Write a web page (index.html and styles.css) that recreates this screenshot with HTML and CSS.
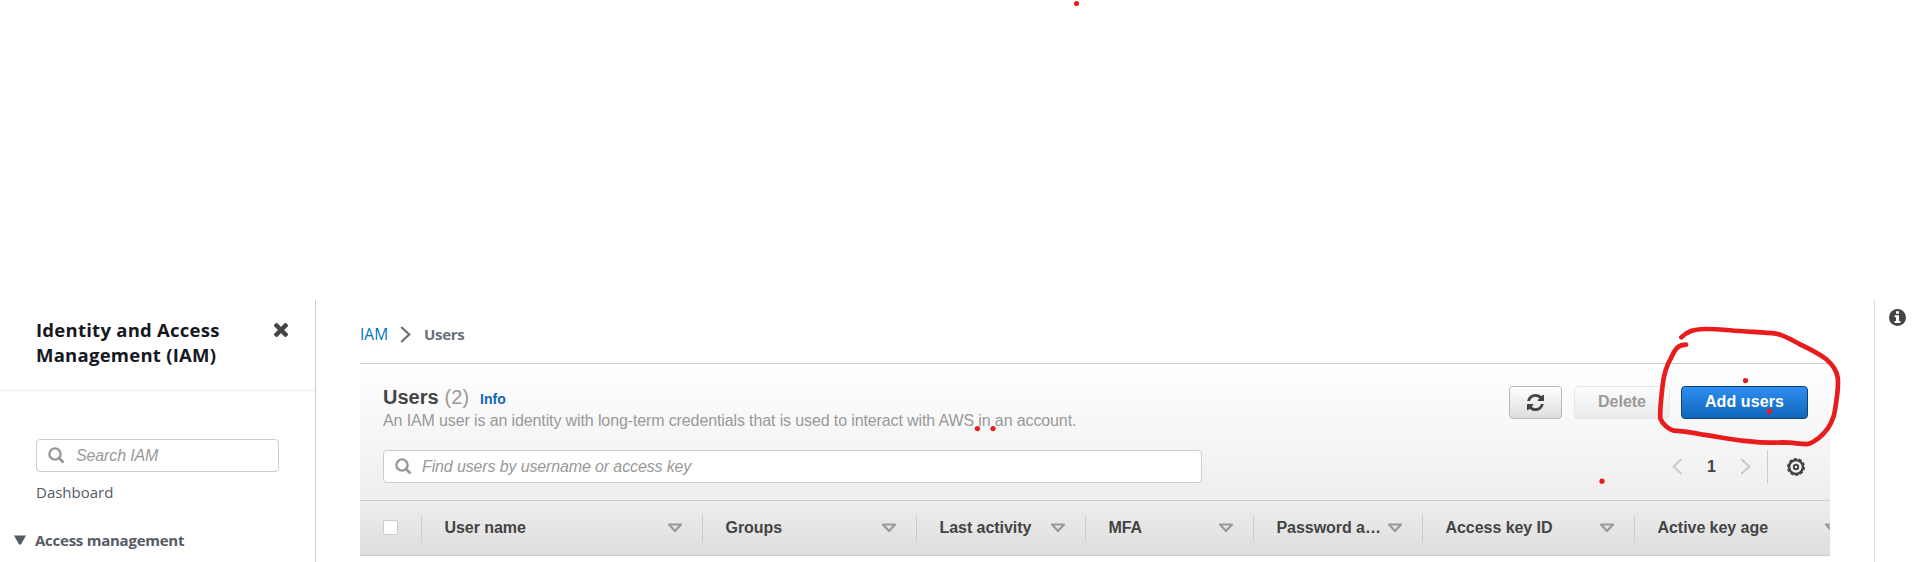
FILE: index.html
```html
<!DOCTYPE html>
<html lang="en">
<head>
<meta charset="utf-8">
<title>IAM Users</title>
<link rel="stylesheet" href="styles.css">
</head>
<body>
<div class="app">
  <nav class="sidebar">
    <div class="side-head">
      <h2 class="side-title">Identity and Access<br>Management (IAM)</h2>
      <svg class="close" width="14" height="14" viewBox="0 0 14 14"><path d="M2.600 2.600 11.400 11.400M11.400 2.600 2.600 11.400" stroke="#444" stroke-width="4.400" stroke-linecap="square"/></svg>
    </div>
    <div class="field side-search">
      <svg width="17" height="17" viewBox="0 0 17 17" fill="none" stroke="#999"><circle cx="7" cy="7" r="5.600" stroke-width="2.400"/><path d="M11 11 15.600 15.400" stroke-width="2.800"/></svg>
      <span>Search IAM</span>
    </div>
    <div class="side-link">Dashboard</div>
    <div class="side-group"><svg width="12" height="10" viewBox="0 0 12 10"><path d="M0 .5H12L7 9.500H5Z" fill="#545b64"/></svg><span>Access management</span></div>
  </nav>
  <main class="main">
    <div class="crumbs">
      <span class="crumb-link">IAM</span>
      <svg width="11" height="17" viewBox="0 0 11 17" fill="none" stroke="#687078" stroke-width="2.200"><path d="M1.200 1 9.200 8.500 1.200 16"/></svg>
      <span class="crumb-here">Users</span>
    </div>
    <section class="panel">
      <div class="panel-head">
        <div class="row">
          <div class="heading">
            <div class="title"><b>Users</b><span class="count">(2)</span><span class="info">Info</span></div>
            <div class="desc">An IAM user is an identity with long-term credentials that is used to interact with AWS in an account.</div>
          </div>
          <div class="actions">
            <div class="btn refresh"><svg width="17" height="17" viewBox="0 0 1536 1536"><path fill="#444" d="M1511 928q0 5-1 7-64 268-268 434.500T764 1536q-146 0-282.500-55T238 1324l-129 129q-19 19-45 19t-45-19-19-45V960q0-26 19-45t45-19h448q26 0 45 19t19 45-19 45l-137 137q71 66 161 102t187 36q134 0 250-65t186-179q11-17 53-117 8-23 30-23h192q13 0 22.500 9.500t9.500 22.500zm25-800v448q0 26-19 45t-45 19h-448q-26 0-45-19t-19-45 19-45l138-138Q969 256 768 256q-134 0-250 65T332 500q-11 17-53 117-8 23-30 23H50q-13 0-22.500-9.500T18 608v-7q65-268 270-434.500T768 0q146 0 284 55.500T1297 212l130-129q19-19 45-19t45 19 19 45z"/></svg></div>
            <div class="btn delete">Delete</div>
            <div class="btn add">Add users</div>
          </div>
        </div>
        <div class="row tools">
          <div class="field find">
            <svg width="17" height="17" viewBox="0 0 17 17" fill="none" stroke="#999"><circle cx="7" cy="7" r="5.600" stroke-width="2.400"/><path d="M11 11 15.600 15.400" stroke-width="2.800"/></svg>
            <span>Find users by username or access key</span>
          </div>
          <div class="pager">
            <svg width="11" height="17" viewBox="0 0 11 17" fill="none" stroke="#ccc" stroke-width="2.200"><path d="M9.600 1 1.600 8.500 9.600 16"/></svg>
            <b>1</b>
            <svg width="11" height="17" viewBox="0 0 11 17" fill="none" stroke="#ccc" stroke-width="2.200"><path d="M1.200 1 9.200 8.500 1.200 16"/></svg>
            <i class="bar"></i>
            <svg width="18" height="18" viewBox="0 0 18 18" fill="none" stroke="#444"><circle cx="9" cy="9" r="6.900" stroke-width="2.400"/><circle cx="9" cy="9" r="8.200" stroke-width="1.600" stroke-dasharray="3.200 1.952"/><circle cx="9" cy="9" r="2.200" stroke-width="2"/></svg>
          </div>
        </div>
      </div>
      <div class="thead">
        <div class="th check"><i class="box"></i></div>
        <div class="th c281">User name<svg class="tri" viewBox="0 0 16 10"><path d="M2 1.500H14L8 8Z"/></svg></div>
        <div class="th c214">Groups<svg class="tri" viewBox="0 0 16 10"><path d="M2 1.500H14L8 8Z"/></svg></div>
        <div class="th c169">Last activity<svg class="tri" viewBox="0 0 16 10"><path d="M2 1.500H14L8 8Z"/></svg></div>
        <div class="th c168">MFA<svg class="tri" viewBox="0 0 16 10"><path d="M2 1.500H14L8 8Z"/></svg></div>
        <div class="th c169">Password a…<svg class="tri" viewBox="0 0 16 10"><path d="M2 1.500H14L8 8Z"/></svg></div>
        <div class="th c212">Access key ID<svg class="tri" viewBox="0 0 16 10"><path d="M2 1.500H14L8 8Z"/></svg></div>
        <div class="th c225">Active key age<svg class="tri" viewBox="0 0 16 10"><path d="M2 1.500H14L8 8Z"/></svg></div>
      </div>
    </section>
  </main>
  <aside class="rail">
    <svg width="17" height="17" viewBox="0 0 17 17"><circle cx="8.500" cy="8.500" r="8.500" fill="#444"/><path fill="#fff" d="M7 2.300h3v2.500H7zM5.600 6.300H10V12h1.400v2H5.600v-2H7V8.200H5.600z"/></svg>
  </aside>
</div>
<svg class="ink" width="1915" height="562" viewBox="0 0 1915 562">
  <g fill="#e81c1c"><circle cx="1076.500" cy="3.500" r="2.600"/><circle cx="977.400" cy="428.600" r="2.600"/><circle cx="993" cy="428.600" r="2.600"/><circle cx="1745.500" cy="380.600" r="2.600"/><circle cx="1769.400" cy="411.400" r="2.600"/><circle cx="1602" cy="481.200" r="2.600"/></g>
  <path transform="translate(1450 310) scale(.33333)" fill="none" stroke="#e81c1c" stroke-width="14" stroke-linecap="round" stroke-linejoin="round" d="M694 82C712 64 730 58 765 57C800 56 830 61 870 63C910 66 950 67 978 71C1005 76 1028 92 1050 103C1080 118 1106 130 1128 147C1150 166 1160 180 1163 202C1166 225 1162 255 1158 280C1154 312 1150 330 1133 356C1118 376 1098 394 1075 402C1055 404 1030 397 1000 397C960 399 920 397 900 394C850 391 800 379 760 374C730 368 700 363 672 362C655 358 638 343 631 326C629 300 634 260 638 225C642 190 648 170 662 146C676 116 684 104 708 104"/>
</svg>
</body>
</html>
```
FILE: styles.css
```css
* { box-sizing: border-box; }
html { overflow: hidden; }
body { margin: 0; background: #fff; font: 16px/20px "Liberation Sans", Arial, sans-serif; color: #444; height: 562px; overflow: hidden; }
svg { display: block; flex: none; }
.app { display: flex; height: 562px; padding-top: 300px; }
.sidebar { width: 316px; border-right: 1px solid #ccc; font-family: "Open Sans", "Noto Sans", sans-serif; flex: none; }
.side-head { display: flex; justify-content: space-between; height: 91px; padding: 17px 27px 0 36px; border-bottom: 1px solid #eaeded; }
.side-title { margin: 0; font-size: 18.5px; line-height: 25px; font-weight: 700; letter-spacing: .25px; color: #16191f; white-space: nowrap; }
.close { margin-top: 6px; }
.field { display: flex; align-items: center; height: 33px; border: 1px solid #ccc; border-radius: 4px; background: #fff; color: #999; font: italic 16px/20px "Liberation Sans", Arial, sans-serif; letter-spacing: -.13px; white-space: nowrap; }
.side-search { width: 243px; margin: 48px 0 0 36px; padding-left: 11px; gap: 11px; }
.side-link { margin: 9px 0 0 36px; font-size: 15px; line-height: 22px; color: #545b64; }
.side-group { display: flex; align-items: center; gap: 9px; margin: 26px 0 0 14px; font-size: 15px; line-height: 22px; font-weight: 700; letter-spacing: -.25px; color: #545b64; white-space: nowrap; }
.main { width: 1558px; padding-left: 44px; flex: none; }
.crumbs { display: flex; align-items: center; height: 63px; padding-top: 6px; font-family: "Open Sans", sans-serif; }
.crumb-link { color: #0073bb; width: 40px; font-size: 15.5px; margin-top: -2px; }
.crumb-here { color: #687078; font-size: 15px; font-weight: 700; letter-spacing: -.3px; margin: -2px 0 0 13px; }
.panel { width: 1470px; border-top: 1px solid #ccc; overflow: hidden; }
.panel-head { height: 137px; padding: 22px 22px 0 23px; border-bottom: 1px solid #ccc; background: linear-gradient(#fff, #eee); }
.row { display: flex; justify-content: space-between; }
.title { display: flex; align-items: baseline; height: 22px; line-height: 22px; font-size: 20px; }
.count { margin-left: 6px; color: #999; }
.info { margin-left: 11px; font-size: 14px; font-weight: 700; color: #1166bb; }
.desc { margin-top: 3px; color: #999; letter-spacing: -.12px; white-space: nowrap; }
.actions { display: flex; }
.btn { display: flex; align-items: center; justify-content: center; height: 33px; border: 1px solid #b8b8b8; border-radius: 4px; background: linear-gradient(#fff, #ddd); font-weight: 700; padding-bottom: 2px; }
.refresh { width: 53px; margin-right: 12px; padding-bottom: 0; }
.delete { width: 96px; margin-right: 11px; border-color: #e6e6e6; background: linear-gradient(#fdfdfd, #eaeaea); color: #999; }
.add { width: 127px; border-color: #0b4375; background: linear-gradient(#2e8df0, #1166bb); color: #fff; letter-spacing: .1px; }
.tools { margin-top: 19px; }
.find { width: 819px; padding-left: 11px; gap: 10px; }
.pager { display: flex; align-items: center; height: 33px; padding-right: 3px; }
.pager b { width: 57px; text-align: center; }
.bar { width: 1px; height: 33px; background: #ccc; margin: 0 19px 0 16px; }
.thead { display: flex; align-items: center; width: 1500px; height: 55px; border-bottom: 1px solid #ccc; background: linear-gradient(#eee, #ddd); }
.th { display: flex; align-items: center; justify-content: space-between; height: 27px; padding: 0 19px 1px 22.5px; border-left: 1px solid #ccc; font-weight: 700; letter-spacing: -.05px; flex: none; white-space: nowrap; }
.check { width: 61px; padding: 0 0 2px 23px; border: 0; }
.box { width: 15px; height: 15px; border: 1px solid #ccc; border-radius: 2px; background: #fff; }
.c281 { width: 281px; } .c214 { width: 214px; } .c169 { width: 169px; } .c168 { width: 168px; } .c212 { width: 212px; } .c225 { width: 225px; }
.tri { width: 16px; height: 10px; fill: none; stroke: #999; stroke-width: 2.2; stroke-linejoin: round; }
.rail { flex: 1; border-left: 1px solid #d5dbdb; padding: 9px 0 0 14px; }
.ink { position: absolute; left: 0; top: 0; pointer-events: none; }
```
